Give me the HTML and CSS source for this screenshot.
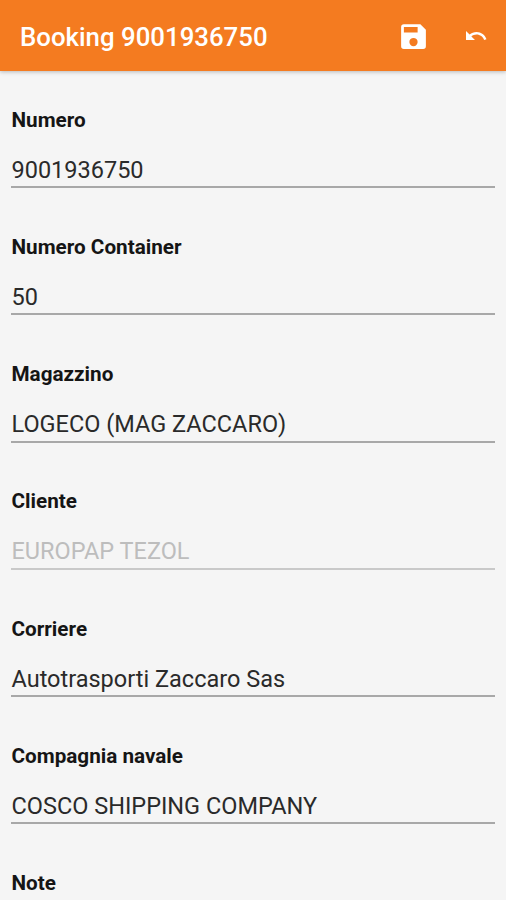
FILE: index.html
```html
<!DOCTYPE html>
<html lang="it">
<head>
<meta charset="utf-8">
<title>Booking</title>
<link rel="stylesheet" href="styles.css">
</head>
<body>
<header class="bar">
  <h1 class="title">Booking 9001936750</h1>
  <svg class="save" viewBox="0 0 24 24"><path d="M17 3H5a2 2 0 0 0-2 2v14a2 2 0 0 0 2 2h14a2 2 0 0 0 2-2V7l-4-4zm-5 16a3 3 0 1 1 0-6 3 3 0 0 1 0 6zm3-10H5V5h10v4z"/></svg>
  <svg class="undo" viewBox="0 0 24 24"><path d="M12.5 8c-2.650 0-5.050.99-6.900 2.600L2 7v9h9l-3.620-3.620c1.390-1.160 3.160-1.880 5.120-1.880 3.540 0 6.550 2.310 7.600 5.500l2.370-.78C21.080 11.030 17.150 8 12.500 8z"/></svg>
</header>
<main class="form">
  <section class="field"><h2 class="label">Numero</h2><div class="value"><span>9001936750</span></div></section>
  <section class="field"><h2 class="label">Numero Container</h2><div class="value"><span>50</span></div></section>
  <section class="field"><h2 class="label">Magazzino</h2><div class="value"><span>LOGECO (MAG ZACCARO)</span></div></section>
  <section class="field"><h2 class="label">Cliente</h2><div class="value disabled"><span>EUROPAP TEZOL</span></div></section>
  <section class="field"><h2 class="label">Corriere</h2><div class="value"><span>Autotrasporti Zaccaro Sas</span></div></section>
  <section class="field"><h2 class="label">Compagnia navale</h2><div class="value"><span>COSCO SHIPPING COMPANY</span></div></section>
  <section class="field last"><h2 class="label">Note</h2></section>
</main>
</body>
</html>
```

FILE: styles.css
```css
* { box-sizing: border-box; }
body { margin: 0; height: 900px; overflow: hidden; background: #f5f5f5; font-family: Roboto, sans-serif; color: #151515; }
.bar { display: flex; align-items: center; height: 71px; padding: 3px 18px 0 20px; background: #f47b20; color: #fff; box-shadow: 0 1px 4px rgba(0,0,0,.25); }
.title { flex: 1; margin: 0; font-size: 25.8px; font-weight: 500; line-height: 32px; }
.bar svg { position: relative; top: -1px; fill: #fff; }
.save { width: 33px; height: 33px; margin-right: 34px; }
.undo { width: 24px; height: 24px; }
.form { padding: 35.5px 11px 0; }
.field { height: 127.3px; }
.last { height: 26px; }
.label { margin: 0; padding-left: .5px; font-size: 20.7px; font-weight: 700; line-height: 26px; }
.value { height: 55.5px; padding: 23px 0 0 .5px; border-bottom: 2px solid #a8a8a8; font-size: 23.5px; font-weight: 400; line-height: 28px; color: #2a2a2a; }
.value.disabled { color: #bdbdbd; border-color: #c9c9c9; }
```
